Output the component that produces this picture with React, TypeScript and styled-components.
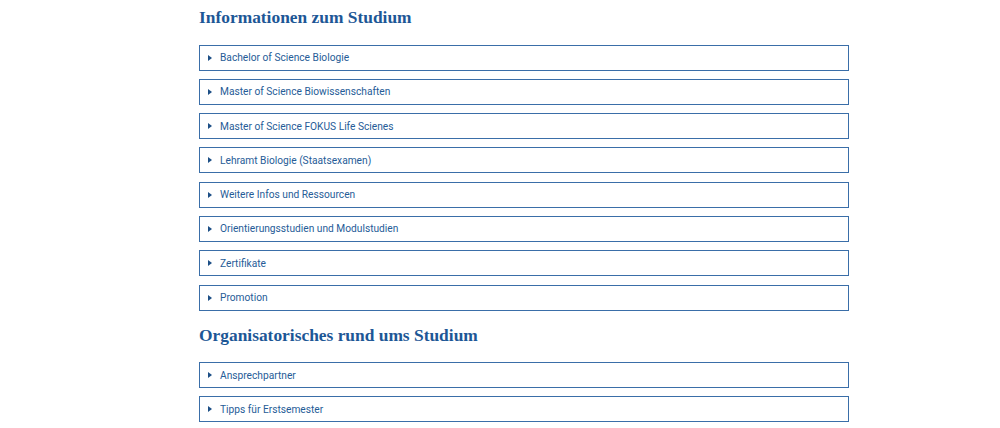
import React from "react";
import styled, { createGlobalStyle } from "styled-components";

const Global = createGlobalStyle`
  html, body { margin: 0; padding: 0; background: #fff; }
  body { font-family: Roboto, "Liberation Sans", Arial, sans-serif; }
`;

const Page = styled.div`
  width: 650px;
  margin-left: 199px;
  padding-top: 7px;
`;

const Heading = styled.h2`
  margin: 0 0 16.5px 0;
  font-family: "Liberation Serif", "Times New Roman", serif;
  font-weight: bold;
  font-size: 17.4px;
  line-height: 21px;
  color: #1d5796;
`;

const List = styled.div`
  display: flex;
  flex-direction: column;
  gap: 8.3px;
  margin-bottom: 14px;
`;

const Item = styled.div`
  box-sizing: border-box;
  height: 26px;
  border: 1px solid #3a6ea8;
  display: flex;
  align-items: center;
  padding-left: 8px;
  gap: 8px;
  font-size: 10.2px;
  color: #265c97;
`;

const Arrow = styled.span`
  width: 0;
  height: 0;
  border-top: 3.5px solid transparent;
  border-bottom: 3.5px solid transparent;
  border-left: 4px solid #1d4f86;
`;

const sections: { title: string; items: string[] }[] = [
  {
    title: "Informationen zum Studium",
    items: [
      "Bachelor of Science Biologie",
      "Master of Science Biowissenschaften",
      "Master of Science FOKUS Life Scienes",
      "Lehramt Biologie (Staatsexamen)",
      "Weitere Infos und Ressourcen",
      "Orientierungsstudien und Modulstudien",
      "Zertifikate",
      "Promotion",
    ],
  },
  {
    title: "Organisatorisches rund ums Studium",
    items: ["Ansprechpartner", "Tipps für Erstsemester"],
  },
];

export default function App() {
  return (
    <>
      <Global />
      <Page>
        {sections.map((s) => (
          <React.Fragment key={s.title}>
            <Heading>{s.title}</Heading>
            <List>
              {s.items.map((it) => (
                <Item key={it}>
                  <Arrow />
                  {it}
                </Item>
              ))}
            </List>
          </React.Fragment>
        ))}
      </Page>
    </>
  );
}
